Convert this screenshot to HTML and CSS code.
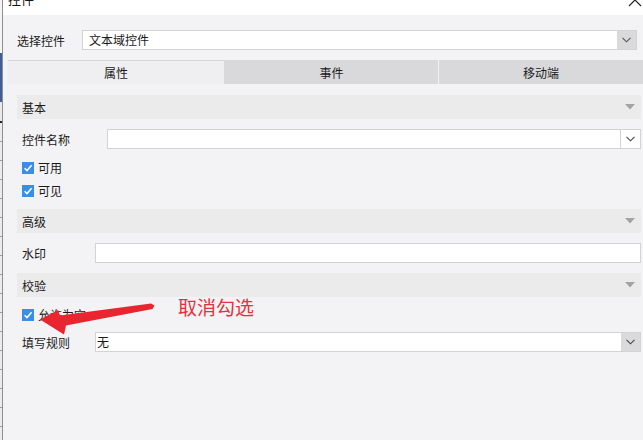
FILE: index.html
```html
<!DOCTYPE html>
<html lang="zh-CN">
<head>
<meta charset="utf-8">
<title>控件</title>
<link rel="stylesheet" href="styles.css">
</head>
<body>
<div class="app">
  <div class="edge">
    <div class="edge-top"></div>
    <div class="edge-blue"></div>
    <div class="edge-gap"></div>
    <div class="edge-dark"></div>
    <div class="edge-rest"></div>
  </div>
  <div class="main">
    <div class="titlebar">
      <span class="title">控件</span>
      <svg class="close" width="14" height="14" viewBox="0 0 14 14"><path d="M1 1 L13 13 M13 1 L1 13" stroke="#222" stroke-width="1.2" fill="none"/></svg>
    </div>
    <div class="picker">
      <span class="picker-label">选择控件</span>
      <div class="select">
        <span class="select-text">文本域控件</span>
        <span class="drop drop-gray"><svg width="9" height="6" viewBox="0 0 9 6"><path d="M0.5 0.8 L4.5 4.8 L8.5 0.8" stroke="#555" stroke-width="1.1" fill="none"/></svg></span>
      </div>
    </div>
    <div class="tabs">
      <div class="tab tab-active">属性</div>
      <div class="tab tab-mid">事件</div>
      <div class="tab tab-last">移动端</div>
    </div>
    <div class="panel">
      <div class="sec-head"><span>基本</span><svg width="10" height="6" viewBox="0 0 10 6"><path d="M0 0 H10 L5 5.5 Z" fill="#a3a3a3"/></svg></div>
      <div class="row r-first">
        <span class="label lw-85">控件名称</span>
        <div class="field">
          <span class="field-text"></span>
          <span class="drop drop-line"><svg width="9" height="6" viewBox="0 0 9 6"><path d="M0.5 0.8 L4.5 4.8 L8.5 0.8" stroke="#444" stroke-width="1.1" fill="none"/></svg></span>
        </div>
      </div>
      <div class="check c-1"><svg class="cb" width="12" height="12" viewBox="0 0 12 12"><rect width="12" height="12" fill="#3a8ee6"/><path d="M2.6 6.2 L5 8.6 L9.6 3.2" stroke="#fff" stroke-width="1.6" fill="none"/></svg><span>可用</span></div>
      <div class="check c-2"><svg class="cb" width="12" height="12" viewBox="0 0 12 12"><rect width="12" height="12" fill="#3a8ee6"/><path d="M2.6 6.2 L5 8.6 L9.6 3.2" stroke="#fff" stroke-width="1.6" fill="none"/></svg><span>可见</span></div>

      <div class="sec-head s-2"><span>高级</span><svg width="10" height="6" viewBox="0 0 10 6"><path d="M0 0 H10 L5 5.5 Z" fill="#a3a3a3"/></svg></div>
      <div class="row r-first">
        <span class="label lw-73">水印</span>
        <div class="field"><span class="field-text"></span></div>
      </div>

      <div class="sec-head s-3"><span>校验</span><svg width="10" height="6" viewBox="0 0 10 6"><path d="M0 0 H10 L5 5.5 Z" fill="#a3a3a3"/></svg></div>
      <div class="check c-3"><svg class="cb" width="12" height="12" viewBox="0 0 12 12"><rect width="12" height="12" fill="#3a8ee6"/><path d="M2.6 6.2 L5 8.6 L9.6 3.2" stroke="#fff" stroke-width="1.6" fill="none"/></svg><span>允许为空</span></div>
      <div class="row r-last">
        <span class="label lw-73">填写规则</span>
        <div class="field">
          <span class="field-text ft-tight">无</span>
          <span class="drop drop-gray"><svg width="9" height="6" viewBox="0 0 9 6"><path d="M0.5 0.8 L4.5 4.8 L8.5 0.8" stroke="#444" stroke-width="1.1" fill="none"/></svg></span>
        </div>
      </div>
    </div>
  </div>
  <svg class="arrow" width="643" height="440" viewBox="0 0 643 440">
    <polygon points="40,319.5 58,310 60,315.5 151,303.5 154.5,305.5 152.5,309 66,325.5 64,334.5" fill="#e9262f"/>
  </svg>
  <div class="note">取消勾选</div>
</div>
</body>
</html>
```

FILE: styles.css
```css
html, body {
  margin: 0;
  padding: 0;
}
body {
  width: 643px;
  height: 440px;
  overflow: hidden;
  background: #f3f3f5;
  font-family: "Noto Sans CJK SC", "Microsoft YaHei", sans-serif;
  font-size: 12px;
  color: #1a1a1a;
}
.app {
  position: relative;
  display: flex;
  width: 643px;
  height: 440px;
}
.edge {
  width: 2px;
  border-right: 1px solid #8e8e8e;
  display: flex;
  flex-direction: column;
}
.edge-top { height: 53px; background: #f4f4f4; }
.edge-blue { height: 49px; background: #3d5f93; }
.edge-gap { height: 19px; background: #e9e9e9; }
.edge-dark { height: 2px; background: #222; }
.edge-rest {
  flex: 1;
  background: repeating-linear-gradient(to bottom, #ececec 0, #ececec 18px, #9a9a9a 18px, #9a9a9a 19px);
}
.main {
  flex: 1;
  display: flex;
  flex-direction: column;
}
.titlebar {
  height: 15px;
  background: #ffffff;
  overflow: hidden;
  display: flex;
  justify-content: space-between;
  align-items: flex-start;
}
.title {
  display: block;
  margin-top: -9px;
  margin-left: 5px;
  font-size: 13px;
  line-height: 16px;
  color: #111;
}
.close {
  margin-top: -7px;
  margin-right: 1px;
}
.picker {
  display: flex;
  align-items: center;
  height: 20px;
  margin-top: 15px;
  padding: 0 6px 0 14px;
}
.picker-label {
  width: 65px;
}
.select, .field {
  flex: 1;
  height: 20px;
  box-sizing: border-box;
  border: 1px solid #d3d3d5;
  background: #ffffff;
  display: flex;
  align-items: stretch;
}
.select-text {
  flex: 1;
  padding-left: 6px;
  line-height: 18px;
}
.field-text {
  flex: 1;
  padding-left: 1px;
  line-height: 18px;
}
.drop {
  width: 19px;
  display: flex;
  align-items: center;
  justify-content: center;
}
.drop-gray {
  background: #dadadc;
}
.drop-line {
  border-left: 1px solid #d3d3d5;
}
.tabs {
  display: flex;
  height: 24px;
  margin-top: 10px;
  margin-left: 5px;
}
.tab {
  display: flex;
  align-items: center;
  justify-content: center;
  background: #d9d9dc;
  color: #1a1a1a;
}
.tab-active {
  width: 216px;
  background: #efeff1;
  border-top: 1px solid #d6d6d8;
  box-sizing: border-box;
}
.tab-mid {
  width: 213px;
  border-left: 1px solid #d9d9dc;
}
.tab-last {
  flex: 1;
  border-left: 1px solid #f2f2f4;
}
.panel {
  display: flex;
  flex-direction: column;
  padding: 11px 2px 0 14px;
}
.sec-head {
  height: 24px;
  background: #ebebeb;
  display: flex;
  align-items: center;
  justify-content: space-between;
  padding: 0 6px 0 5px;
}
.s-2 { margin-top: 12px; }
.s-3 { margin-top: 10px; }
.row {
  display: flex;
  align-items: center;
  height: 20px;
  padding-left: 5px;
}
.r-first { margin-top: 10px; }
.r-last { margin-top: 11px; }
.label { flex: none; }
.lw-85 { width: 85px; }
.lw-73 { width: 73px; }
.check {
  display: flex;
  align-items: center;
  height: 12px;
  padding-left: 5px;
}
.check span {
  margin-left: 4px;
  line-height: 12px;
}
.cb { flex: none; }
.c-1 { margin-top: 13px; }
.c-2 { margin-top: 11px; }
.c-3 { margin-top: 12px; }
.arrow {
  position: absolute;
  left: 0;
  top: 0;
  pointer-events: none;
}
.note {
  position: absolute;
  left: 178px;
  top: 294px;
  font-size: 19px;
  line-height: 25px;
  color: #e8303a;
}
```
